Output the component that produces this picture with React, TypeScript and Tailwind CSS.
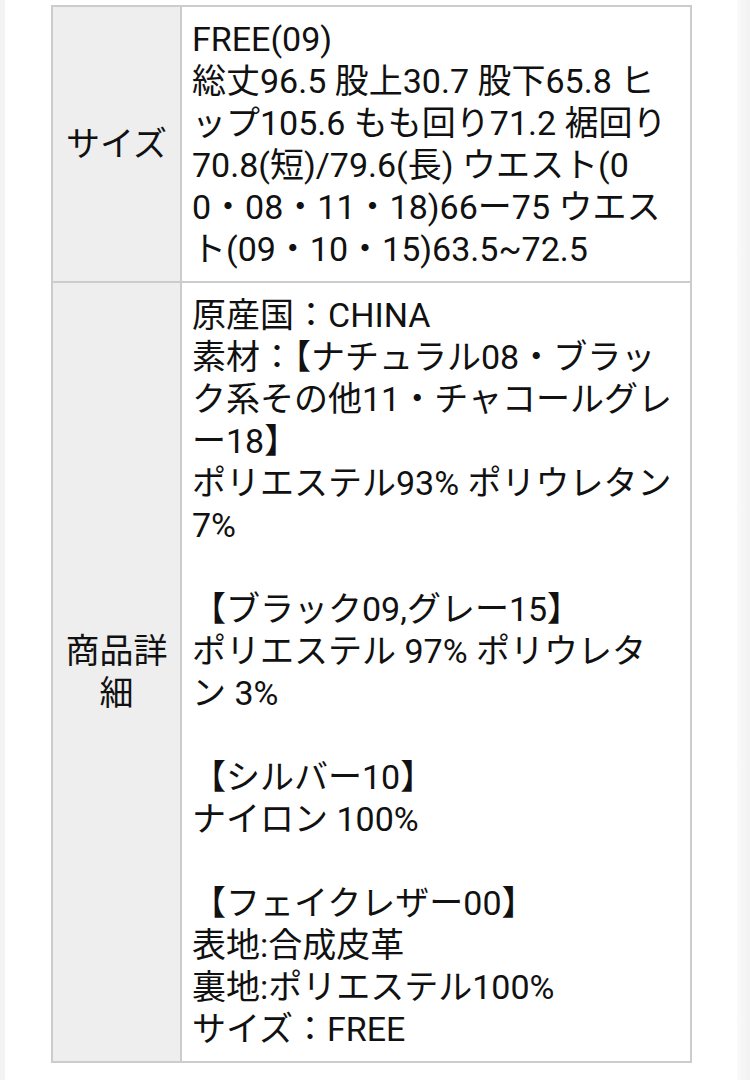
import React from "react";

const sizeText = `FREE(09)
総丈96.5 股上30.7 股下65.8 ヒップ105.6 もも回り71.2 裾回り70.8(短)/79.6(長) ウエスト(00・08・11・18)66ー75 ウエスト(09・10・15)63.5~72.5`;

const detailText = `原産国：CHINA
素材：【ナチュラル08・ブラック系その他11・チャコールグレー18】
ポリエステル93% ポリウレタン7%

【ブラック09,グレー15】
ポリエステル 97% ポリウレタン 3%

【シルバー10】
ナイロン 100%

【フェイクレザー00】
表地:合成皮革
裏地:ポリエステル100%
サイズ：FREE`;

export default function App() {
  return (
    <div
      className="w-[750px] min-h-[1080px] bg-white flex text-[#111]"
      style={{ fontFamily: 'Roboto, "Noto Sans CJK JP", sans-serif' }}
    >
      <div className="w-[5px] bg-[#f3f3f3]" />
      <div className="w-[732px] pt-[5px] pl-[46px]">
        <div className="w-[641px] border-2 border-[#cccccc] text-[34px] leading-[42px]">
          <div className="flex border-b-2 border-[#cccccc]">
            <div className="w-[129px] shrink-0 bg-[#eeeeee] border-r-2 border-[#cccccc] flex items-center justify-center text-center px-[10px]">
              サイズ
            </div>
            <div className="flex-1 pl-[10px] pr-[15px] py-[11px] whitespace-pre-line break-all">
              {sizeText}
            </div>
          </div>
          <div className="flex">
            <div className="w-[129px] shrink-0 bg-[#eeeeee] border-r-2 border-[#cccccc] flex items-center justify-center text-center px-[10px]">
              商品詳細
            </div>
            <div className="flex-1 pl-[10px] pr-[15px] py-[11px] whitespace-pre-line break-all">
              {detailText}
            </div>
          </div>
        </div>
      </div>
      <div className="w-[13px] bg-gradient-to-r from-[#fafafa] to-[#f2f2f2]" />
    </div>
  );
}
